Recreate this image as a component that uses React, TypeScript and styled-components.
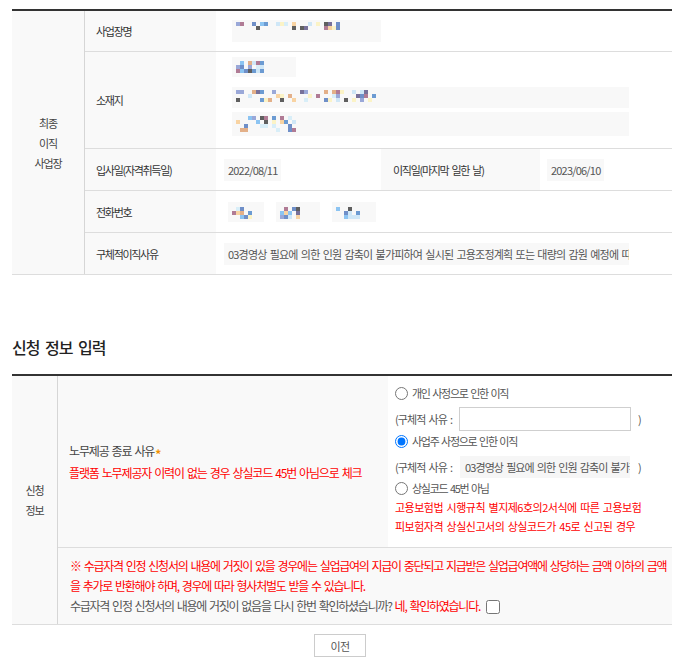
import React from 'react';
import styled, { createGlobalStyle } from 'styled-components';

const GlobalStyle = createGlobalStyle`
  html, body { margin: 0; padding: 0; background: #fff; }
  body {
    font-family: "Noto Sans CJK KR", "Noto Sans", sans-serif;
    color: #333;
  }
  * { box-sizing: border-box; }
`;

const Page = styled.div`
  width: 683px;
  padding: 9px 11px 12px 12px;
`;

const Table = styled.div`
  display: flex;
  border-top: 2px solid #333;
  border-bottom: 1px solid #ddd;
`;

const SideHead = styled.div<{ $w: number }>`
  flex: none;
  width: ${(p) => p.$w}px;
  background: #f9f9f9;
  border-right: 1px solid #d6d6d6;
  display: flex;
  align-items: center;
  justify-content: center;
  text-align: center;
  font-size: 11px;
  letter-spacing: -1.2px;
  line-height: 20px;
  color: #444;
`;

const Rows = styled.div`
  flex: 1;
  display: flex;
  flex-direction: column;
`;

const Row = styled.div<{ $h: number }>`
  display: flex;
  height: ${(p) => p.$h}px;
  & + & {
    border-top: 1px solid #ddd;
  }
`;

const Label = styled.div<{ $w?: number; $pl?: number }>`
  flex: none;
  width: ${(p) => p.$w ?? 131}px;
  padding-left: ${(p) => p.$pl ?? 11}px;
  background: #f9f9f9;
  display: flex;
  align-items: center;
  font-size: 11px;
  letter-spacing: -1.3px;
  word-spacing: 2px;
  color: #333;
  white-space: nowrap;
`;

const Value = styled.div<{ $w?: number; $pl?: number; $gap?: number }>`
  ${(p) => (p.$w ? `flex: none; width: ${p.$w}px;` : 'flex: 1;')}
  padding-left: ${(p) => p.$pl ?? 8}px;
  display: flex;
  align-items: center;
  gap: ${(p) => p.$gap ?? 0}px;
  min-width: 0;
`;

const StackValue = styled.div`
  flex: 1;
  padding: 5px 0 0 16px;
  display: flex;
  flex-direction: column;
  align-items: flex-start;
`;

const Field = styled.span<{ $w?: number }>`
  display: inline-block;
  ${(p) => (p.$w ? `width: ${p.$w}px;` : '')}
  height: 22px;
  line-height: 22px;
  padding: 0 4px;
  background: #f8f8f8;
  font-size: 11px;
  letter-spacing: -0.8px;
  word-spacing: 1.5px;
  color: #555;
  white-space: nowrap;
  overflow: hidden;
`;

const MaskSvg = styled.svg<{ $mt?: number; $ml?: number }>`
  display: block;
  flex: none;
  margin-top: ${(p) => p.$mt ?? 0}px;
  margin-left: ${(p) => p.$ml ?? 0}px;
`;

const PALETTE = [
  '#5f5f5f', '#8cc4f2', '#e3b089', '#fbf3c6', '#b07b95', '#6f8fc8',
  '#d8eef8', '#f8d3a2', '#77719a', '#6c9bd2', '#cfe7f7', '#9aa8d8',
];

function makeRand(seed: number) {
  let s = seed * 9301 + 49297;
  return () => {
    s = (s * 1103515245 + 12345) & 0x7fffffff;
    return s / 0x7fffffff;
  };
}

type MosaicProps = {
  w: number;
  h: number;
  cols: number;
  rows: number;
  ox?: number;
  oy: number;
  seed: number;
  density?: number;
  mt?: number;
  ml?: number;
};

function Mosaic({ w, h, cols, rows, ox = 4, oy, seed, density = 0.5, mt, ml }: MosaicProps) {
  const r = makeRand(seed);
  const cells: React.ReactNode[] = [];
  for (let j = 0; j < rows; j++) {
    for (let i = 0; i < cols; i++) {
      const on = r() < density;
      const c = PALETTE[Math.floor(r() * PALETTE.length)];
      if (on) {
        cells.push(
          <rect key={`${i}-${j}`} x={ox + i * 4} y={oy + j * 4} width={4} height={4} fill={c} />
        );
      }
    }
  }
  return (
    <MaskSvg width={w} height={h} viewBox={`0 0 ${w} ${h}`} $mt={mt} $ml={ml}>
      <rect width={w} height={h} fill="#f8f8f8" />
      {cells}
    </MaskSvg>
  );
}

const SectionTitle = styled.h2`
  margin: 62px 0 17px;
  font-size: 16px;
  line-height: 20px;
  font-weight: 500;
  letter-spacing: -1px;
  word-spacing: 3px;
  color: #222;
`;

const ReasonRow = styled.div`
  display: flex;
  border-bottom: 1px solid #ddd;
`;

const ReasonLabel = styled.div`
  flex: none;
  width: 330px;
  padding-left: 11px;
  background: #f9f9f9;
  display: flex;
  flex-direction: column;
  justify-content: center;
  font-size: 12px;
  line-height: 19px;
  letter-spacing: -1.15px;
  word-spacing: 1.5px;
  color: #444;
  white-space: nowrap;
`;

const Star = styled.span`
  color: #f39200;
  font-weight: 700;
  vertical-align: -3px;
  margin-left: 1px;
`;

const RedText = styled.span`
  color: #ff0000;
`;

const Options = styled.div`
  flex: 1;
  padding: 7px 0 11px 7px;
  font-size: 11px;
  letter-spacing: -1.3px;
  word-spacing: 1.5px;
  color: #555;
  white-space: nowrap;
`;

const OptionLine = styled.label`
  display: flex;
  align-items: center;
  height: 20px;
`;

const Radio = styled.input`
  width: 13px;
  height: 13px;
  margin: 0 4px 0 0;
`;

const DetailLine = styled.div<{ $h: number; $mt: number }>`
  display: flex;
  align-items: center;
  height: ${(p) => p.$h}px;
  margin-top: ${(p) => p.$mt}px;
`;

const DetailPrefix = styled.span<{ $w: number }>`
  flex: none;
  width: ${(p) => p.$w}px;
  letter-spacing: -0.9px;
`;

const DetailInput = styled.input`
  width: 172px;
  height: 24px;
  border: 1px solid #cfcfcf;
  background: #fff;
  margin: 0;
  padding: 0 4px;
`;

const DetailBox = styled.span`
  display: inline-block;
  width: 170px;
  height: 22px;
  line-height: 22px;
  padding: 0 5px;
  background: #f6f6f6;
  overflow: hidden;
  white-space: nowrap;
  letter-spacing: -0.9px;
  word-spacing: 1.5px;
  color: #555;
`;

const Close = styled.span<{ $ml: number }>`
  margin-left: ${(p) => p.$ml}px;
`;

const RedNote = styled.div`
  color: #ff0000;
  line-height: 19px;
  letter-spacing: -0.5px;
`;

const Notice = styled.div`
  background: #f9f9f9;
  padding: 8px 4px 8px 12px;
  font-size: 12px;
  line-height: 20px;
  letter-spacing: -1.25px;
  word-spacing: 1.5px;
  color: #555;
`;

const Check = styled.input`
  width: 14px;
  height: 14px;
  margin: 0 0 0 6px;
  vertical-align: -3px;
`;

const ButtonBar = styled.div`
  display: flex;
  justify-content: center;
  margin: 9px 4px 0 0;
`;

const Button = styled.button`
  width: 52px;
  height: 23px;
  border: 1px solid #cccccc;
  background: #fff;
  font-family: inherit;
  font-size: 11px;
  letter-spacing: -0.5px;
  color: #555;
  padding: 0;
`;

export default function App() {
  return (
    <>
      <GlobalStyle />
      <Page>
        <Table>
          <SideHead $w={73}>
            최종
            <br />
            이직
            <br />
            사업장
          </SideHead>
          <Rows>
            <Row $h={40}>
              <Label>사업장명</Label>
              <Value>
                <Mosaic w={149} h={22} cols={26} rows={2} oy={2} seed={3} ml={8} />
              </Value>
            </Row>
            <Row $h={97}>
              <Label>소재지</Label>
              <StackValue>
                <Mosaic w={64} h={20} cols={7} rows={3} oy={4} seed={11} density={0.7} />
                <Mosaic w={397} h={21} cols={36} rows={3} oy={3} seed={7} density={0.45} mt={10} />
                <Mosaic w={397} h={24} cols={16} rows={4} oy={4} seed={21} density={0.35} mt={4} />
              </StackValue>
            </Row>
            <Row $h={42}>
              <Label>입사일(자격취득일)</Label>
              <Value $w={165}>
                <Field>2022/08/11</Field>
              </Value>
              <Label $w={159} $pl={12}>
                이직일(마지막 일한 날)
              </Label>
              <Value $pl={7}>
                <Field>2023/06/10</Field>
              </Value>
            </Row>
            <Row $h={42}>
              <Label>전화번호</Label>
              <Value $gap={12} $pl={12}>
                <Mosaic w={36} h={20} cols={5} rows={3} oy={5} seed={31} density={0.5} />
                <Mosaic w={44} h={20} cols={6} rows={3} oy={5} seed={41} density={0.5} />
                <Mosaic w={44} h={20} cols={6} rows={3} oy={5} seed={51} density={0.5} />
              </Value>
            </Row>
            <Row $h={42}>
              <Label>구체적이직사유</Label>
              <Value>
                <Field $w={405}>
                  03경영상 필요에 의한 인원 감축이 불가피하여 실시된 고용조정계획 또는 대량의 감원 예정에 따른 퇴직
                </Field>
              </Value>
            </Row>
          </Rows>
        </Table>

        <SectionTitle>신청 정보 입력</SectionTitle>

        <Table>
          <SideHead $w={46}>
            신청
            <br />
            정보
          </SideHead>
          <Rows>
            <ReasonRow>
              <ReasonLabel>
                <div>
                  노무제공 종료 사유<Star>*</Star>
                </div>
                <RedText>플랫폼 노무제공자 이력이 없는 경우 상실코드 45번 아님으로 체크</RedText>
              </ReasonLabel>
              <Options>
                <OptionLine>
                  <Radio type="radio" name="reason" />
                  개인 사정으로 인한 이직
                </OptionLine>
                <DetailLine $h={24} $mt={4}>
                  <DetailPrefix $w={64}>(구체적 사유 :</DetailPrefix>
                  <DetailInput type="text" />
                  <Close $ml={7}>)</Close>
                </DetailLine>
                <OptionLine>
                  <Radio type="radio" name="reason" defaultChecked />
                  사업주 사정으로 인한 이직
                </OptionLine>
                <DetailLine $h={22} $mt={5}>
                  <DetailPrefix $w={65}>(구체적 사유 :</DetailPrefix>
                  <DetailBox>03경영상 필요에 의한 인원 감축이 불가피하여</DetailBox>
                  <Close $ml={8}>)</Close>
                </DetailLine>
                <OptionLine>
                  <Radio type="radio" name="reason" />
                  상실코드 45번 아님
                </OptionLine>
                <RedNote>고용보험법 시행규칙 별지제6호의2서식에 따른 고용보험</RedNote>
                <RedNote>피보험자격 상실신고서의 상실코드가 45로 신고된 경우</RedNote>
              </Options>
            </ReasonRow>
            <Notice>
              <RedText>
                ※ 수급자격 인정 신청서의 내용에 거짓이 있을 경우에는 실업급여의 지급이 중단되고 지급받은 실업급여액에 상당하는 금액 이하의 금액
                <br />을 추가로 반환해야 하며, 경우에 따라 형사처벌도 받을 수 있습니다.
              </RedText>
              <br />
              수급자격 인정 신청서의 내용에 거짓이 없음을 다시 한번 확인하셨습니까?{' '}
              <RedText>네, 확인하였습니다.</RedText>
              <Check type="checkbox" />
            </Notice>
          </Rows>
        </Table>

        <ButtonBar>
          <Button type="button">이전</Button>
        </ButtonBar>
      </Page>
    </>
  );
}
